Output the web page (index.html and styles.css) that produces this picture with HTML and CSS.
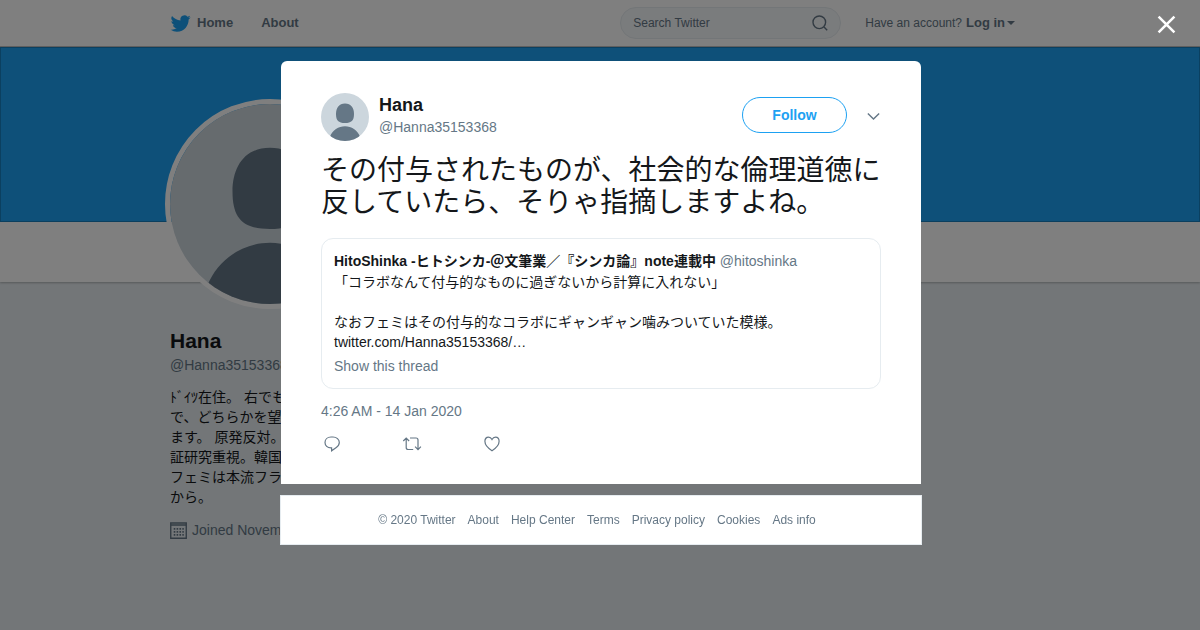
FILE: index.html
```html
<!DOCTYPE html>
<html lang="en">
<head>
    <meta charset="UTF-8">
    <meta name="viewport" content="width=device-width, initial-scale=1.0">
    <title>Hana on Twitter</title>
    <link rel="stylesheet" href="styles.css">
</head>
<body>
    <!-- Top bar -->
    <header class="topbar">
        <div class="container topbar-inner">
            <nav class="nav">
                <a class="nav-link" href="#">
                    <svg class="bird" viewBox="0 0 24 24"><path d="M23.6 4.9c-.85.38-1.75.63-2.7.74.97-.58 1.7-1.5 2.06-2.6-.9.54-1.9.93-2.97 1.14a4.7 4.7 0 0 0-8 4.28A13.3 13.3 0 0 1 2.3 3.55a4.7 4.7 0 0 0 1.46 6.27 4.6 4.6 0 0 1-2.13-.6v.06c0 2.28 1.6 4.18 3.77 4.6a4.7 4.7 0 0 1-2.13.1 4.7 4.7 0 0 0 4.4 3.25A9.4 9.4 0 0 1 .72 19.2a13.2 13.2 0 0 0 7.2 2.12c8.64 0 13.36-7.17 13.36-13.37 0-.2 0-.4-.02-.6a9.5 9.5 0 0 0 2.34-2.45z"/></svg>
                    Home
                </a>
                <a class="nav-link" href="#">About</a>
            </nav>
            <form class="search">
                <input class="search-input" type="text" placeholder="Search Twitter" aria-label="Search Twitter">
                <button class="search-btn" type="button" aria-label="Search">
                    <svg viewBox="0 0 16 16"><circle cx="7.3" cy="7.3" r="6.3"/><path d="M12 12l3.2 3.2"/></svg>
                </button>
            </form>
            <a class="login" href="#">Have an account? <b>Log in</b><span class="caret"></span></a>
        </div>
    </header>

    <!-- Profile page -->
    <div class="banner"></div>
    <div class="stats-bar"></div>
    <main class="container profile">
        <svg class="profile-avatar" viewBox="0 0 48 48"><rect width="48" height="48" fill="#ccd6dd"/><path d="M24 10.500c-6 0-9 4.500-9 10.500 0 6.500 2.500 9 9 9s9-2.500 9-9c0-6-3-10.500-9-10.500zM9 43.500c2.500-6.200 8.500-10.200 15-10.200S36.500 37.300 39 43.500V48H9z" fill="#657786"/></svg>
        <h1 class="profile-name">Hana</h1>
        <a class="profile-handle" href="#">@Hanna35153368</a>
        <p class="bio">ﾄﾞｲﾂ在住。 右でも<br>で、どちらかを望<br>ます。 原発反対。<br>証研究重視。韓国<br>フェミは本流フラ<br>から。</p>
        <div class="joined">
            <svg viewBox="0 0 16 16"><path d="M.7 1h14.600v14.300H.7zM.7 2.800h14.600" fill="none" stroke="#657786" stroke-width="1.300"/><path d="M3.500 6.500h9.500M3.500 9.300h9.500M3.500 12.100h9.500" stroke="#657786" stroke-width="1.500" stroke-dasharray="1.500 1.200"/></svg>
            Joined November
        </div>
    </main>

    <!-- Tweet overlay -->
    <div class="overlay">
        <button class="close" type="button" aria-label="Close">
            <svg viewBox="0 0 18 18"><path d="M1.500 1.500l15 15M16.500 1.500l-15 15"/></svg>
        </button>
        <div class="modal">
            <article class="tweet">
                <div class="tweet-header">
                    <svg class="avatar" viewBox="0 0 48 48"><rect width="48" height="48" fill="#ccd6dd"/><path d="M24 10.500c-6 0-9 4.500-9 10.500 0 6.500 2.500 9 9 9s9-2.500 9-9c0-6-3-10.500-9-10.500zM9 43.500c2.500-6.200 8.500-10.200 15-10.200S36.500 37.300 39 43.500V48H9z" fill="#657786"/></svg>
                    <a class="author" href="#">
                        <strong class="author-name">Hana</strong>
                        <span class="handle">@Hanna35153368</span>
                    </a>
                    <button class="follow" type="button">Follow</button>
                    <button class="more" type="button" aria-label="More">
                        <svg viewBox="0 0 12 8"><path d="M.8 1.200L6 6.400l5.200-5.200"/></svg>
                    </button>
                </div>
                <p class="tweet-text" lang="ja">その付与されたものが、社会的な倫理道徳に反していたら、そりゃ指摘しますよね。</p>
                <div class="quote">
                    <div class="quote-author"><b>HitoShinka -ヒトシンカ-＠文筆業／『シンカ論』note連載中</b> <span class="handle">@hitoshinka</span></div>
                    <p class="quote-text">「コラボなんて付与的なものに過ぎないから計算に入れない」<br><br>なおフェミはその付与的なコラボにギャンギャン噛みついていた模様。<br>twitter.com/Hanna35153368/…</p>
                    <a class="thread" href="#">Show this thread</a>
                </div>
                <div class="date">4:26 AM - 14 Jan 2020</div>
                <div class="actions">
                    <button class="action" type="button" aria-label="Reply">
                        <svg viewBox="0 0 22 18"><path d="M10 2h2c3.600 0 6.300 2.400 6.300 5.500 0 2.100-1.200 3.700-3 4.900L10.600 15.800v-2.900H10C6.400 12.900 4 10.600 4 7.500S6.400 2 10 2z"/></svg>
                    </button>
                    <button class="action" type="button" aria-label="Retweet">
                        <svg viewBox="0 0 22 18"><path d="M2.300 6l2.900-3 2.900 3M5.200 3.300v9.200c0 1.200.7 2 2 2h5M9 3h6c1.300 0 2 .8 2 2v9.300M14.100 11.600l2.900 3 2.900-3"/></svg>
                    </button>
                    <button class="action" type="button" aria-label="Like">
                        <svg viewBox="0 0 22 18"><path d="M11 15.700C7.500 13.500 3.900 10.300 3.900 6.300c0-2.400 1.600-4.100 3.600-4.100 1.500 0 2.700.8 3.500 2.300.8-1.500 2-2.300 3.500-2.300 2 0 3.600 1.700 3.600 4.100 0 4-3.600 7.200-7.100 9.400z"/></svg>
                    </button>
                </div>
            </article>
            <footer class="footer">
                <span>© 2020 Twitter</span>
                <a href="#">About</a>
                <a href="#">Help Center</a>
                <a href="#">Terms</a>
                <a href="#">Privacy policy</a>
                <a href="#">Cookies</a>
                <a href="#">Ads info</a>
            </footer>
        </div>
    </div>
</body>
</html>
```
FILE: styles.css
```css
* {
    box-sizing: border-box;
}
body {
    margin: 0;
    min-height: 100vh;
    font-family: "Liberation Sans", "Noto Sans CJK JP", sans-serif;
    font-size: 14px;
    line-height: 20px;
    color: #14171a;
    background-color: #e6ecf0;
    overflow: hidden;
}
a {
    color: inherit;
    text-decoration: none;
}
button {
    padding: 0;
    border: none;
    background: none;
    font-family: inherit;
    cursor: pointer;
}
svg {
    display: block;
}
.container {
    max-width: 860px;
    margin: 0 auto;
}

/* Top bar */
.topbar {
    height: 47px;
    background-color: #fff;
    border-bottom: 1px solid rgba(0, 0, 0, 0.25);
}
.topbar-inner {
    display: flex;
    align-items: center;
    height: 46px;
    padding-right: 15px;
}
.nav {
    display: flex;
    gap: 28px;
    flex: 1;
}
.nav-link {
    display: flex;
    align-items: center;
    gap: 6px;
    font-size: 13px;
    font-weight: bold;
    color: #657786;
}
.bird {
    width: 21px;
    height: 21px;
    fill: #1da1f2;
}
.search {
    display: flex;
    align-items: center;
    width: 221px;
    height: 32px;
    margin-right: 24px;
    padding: 0 12px;
    border: 1px solid #e6ecf0;
    border-radius: 16px;
    background-color: #f5f8fa;
}
.search-input {
    flex: 1;
    min-width: 0;
    padding: 0;
    border: none;
    outline: none;
    background: none;
    font-family: inherit;
    font-size: 12px;
}
.search-input::placeholder {
    color: #657786;
}
.search-btn svg {
    width: 16px;
    height: 16px;
    fill: none;
    stroke: #657786;
    stroke-width: 1.4;
}
.login {
    display: flex;
    align-items: center;
    gap: 4px;
    font-size: 12px;
    color: #657786;
}
.login b {
    font-size: 13px;
}
.caret {
    border: 4px solid transparent;
    border-top-color: #657786;
    border-bottom: none;
    margin-left: -2px;
}

/* Profile */
.banner {
    height: 175px;
    background-color: #1da1f2;
    border: 1px solid rgba(0, 0, 0, 0.2);
}
.stats-bar {
    height: 60px;
    background-color: #fff;
    box-shadow: 0 1px 2px rgba(0, 0, 0, 0.25);
}
.profile {
    position: relative;
    display: flow-root;
}
.profile-avatar {
    width: 210px;
    height: 210px;
    margin: -183px 0 0 -5px;
    border: 5px solid #fff;
    border-radius: 50%;
}
.profile-name {
    margin: 20px 0 0;
    font-size: 21px;
    line-height: 24px;
}
.profile-handle {
    display: block;
    margin-top: 2px;
    color: #657786;
}
.bio {
    margin: 12px 0;
}
.joined {
    display: flex;
    align-items: center;
    gap: 5px;
    margin-top: 13px;
    color: #657786;
}
.joined svg {
    width: 17px;
    height: 17px;
}

/* Overlay */
.overlay {
    position: fixed;
    top: 0;
    left: 0;
    width: 100%;
    height: 100%;
    padding: 61px 0 0 2px;
    background-color: rgba(0, 0, 0, 0.5);
    overflow: hidden;
}
.close {
    position: absolute;
    top: 15px;
    right: 24px;
}
.close svg {
    width: 19px;
    height: 19px;
    fill: none;
    stroke: #fff;
    stroke-width: 2.4;
}
.modal {
    max-width: 642px;
    margin: 0 auto;
}
.tweet {
    margin: 0 1px 11px;
    padding: 32px 40px 31px;
    border-radius: 6px 6px 0 0;
    background-color: #fff;
}
.tweet-header {
    display: flex;
    align-items: center;
}
.avatar {
    width: 48px;
    height: 48px;
    margin-right: 10px;
    border-radius: 50%;
}
.author {
    display: flex;
    flex-direction: column;
    flex: 1;
    padding-bottom: 4px;
}
.author-name {
    font-size: 18px;
    line-height: 24px;
}
.handle {
    color: #657786;
}
.follow {
    width: 105px;
    height: 36px;
    margin: 0 20px 4px 0;
    border: 1px solid #1da1f2;
    border-radius: 18px;
    font-size: 14px;
    font-weight: bold;
    color: #1da1f2;
}
.more {
    padding: 0 1px 2px 0;
}
.more svg {
    width: 13px;
    height: 9px;
    fill: none;
    stroke: #657786;
    stroke-width: 1.3;
}
.tweet-text {
    margin: 14px 0 19px;
    font-size: 28px;
    line-height: 32px;
}
.quote {
    padding: 12px;
    border: 1px solid #e6ecf0;
    border-radius: 12px;
}
.quote-text {
    margin: 1px 0 4px;
}
.thread {
    display: block;
    color: #657786;
}
.date {
    margin-top: 12px;
    color: #657786;
}
.actions {
    display: flex;
    gap: 58px;
    margin-top: 14px;
}
.action svg {
    width: 22px;
    height: 18px;
    fill: none;
    stroke: #657786;
    stroke-width: 1.2;
}
.footer {
    display: flex;
    justify-content: center;
    gap: 12px;
    padding: 14px 8px 14px 0;
    border: 1px solid #e6ecf0;
    background-color: #fff;
    font-size: 12px;
    color: #657786;
}
```
